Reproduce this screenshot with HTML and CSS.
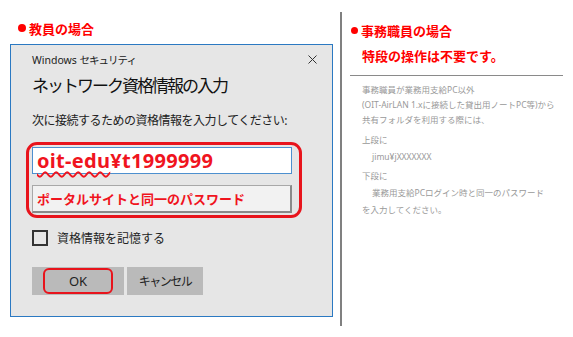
FILE: index.html
```html
<!DOCTYPE html>
<html lang="ja">
<head>
  <meta charset="UTF-8">
  <title>共有フォルダの資格情報</title>
  <link rel="stylesheet" href="styles.css">
</head>
<body>
  <div class="page">
    <div class="col-left">
      <h2 class="case"><span class="dot"></span>教員の場合</h2>
      <div class="dialog">
        <div class="titlebar">
          <span class="app">Windows <span class="kana">セキュリティ</span></span>
          <svg class="close" width="9" height="9" viewBox="0 0 9 9">
            <path d="M0.5 0.5 L8.5 8.5 M8.5 0.5 L0.5 8.5" stroke="#333" stroke-width="1" fill="none"/>
          </svg>
        </div>
        <div class="dlg-title">ネットワーク資格情報の入力</div>
        <div class="prompt">次に接続するための資格情報を入力してください:</div>
        <div class="mark">
          <div class="field user"><span class="typo">oit-edu</span>¥t1999999</div>
          <div class="field pass">ポータルサイトと同一のパスワード</div>
        </div>
        <div class="remember"><span class="box"></span>資格情報を記憶する</div>
        <div class="buttons">
          <div class="btn ok"><span class="ring">OK</span></div>
          <div class="btn cancel">キャンセル</div>
        </div>
      </div>
    </div>

    <div class="divider"></div>

    <div class="col-right">
      <h2 class="case small-dot"><span class="dot"></span>事務職員の場合</h2>
      <p class="notice">特段の操作は不要です。</p>
      <hr class="rule">
      <div class="note">
        <p class="intro">事務職員が業務用支給PC以外<br>(OIT-AirLAN 1.xに接続した貸出用ノートPC等)から<br>共有フォルダを利用する際には、</p>
        <p>上段に</p>
        <p class="indent">jimu¥jXXXXXXX</p>
        <p class="gap">下段に</p>
        <p class="indent">業務用支給PCログイン時と同一のパスワード</p>
        <p>を入力してください。</p>
      </div>
    </div>
  </div>
</body>
</html>
```

FILE: styles.css
```css
* {
  box-sizing: border-box;
}

body {
  margin: 0;
  background: #ffffff;
  font-family: "Noto Sans", "Noto Sans CJK JP", sans-serif;
  color: #000000;
}

.page {
  display: flex;
  width: 573px;
  height: 337px;
}

/* 見出し */
.case {
  display: flex;
  align-items: center;
  margin: 18px 0 6px 0;
  padding-left: 8px;
  height: 20px;
  font-size: 13px;
  font-weight: bold;
  color: #ff0000;
  font-family: "Noto Sans CJK JP", sans-serif;
}

.dot {
  width: 8px;
  height: 8px;
  border-radius: 50%;
  background: #ff0000;
  margin-right: 3px;
}

.small-dot {
  margin-top: 20px;
  padding-left: 9px;
}

.small-dot .dot {
  width: 7px;
  height: 7px;
  margin-right: 3px;
}

/* 左側 */
.col-left {
  width: 340px;
  padding-left: 10px;
}

.dialog {
  width: 323px;
  background: #e6e6e6;
  border: 1px solid #2b79c2;
  padding: 0 0 21px 21px;
}

.titlebar {
  height: 28px;
  display: flex;
  align-items: center;
  justify-content: space-between;
  padding-right: 15px;
  font-size: 10.5px;
  color: #222;
}

.kana {
  letter-spacing: -1px;
}

.dlg-title {
  height: 24px;
  line-height: 24px;
  font-size: 17px;
  letter-spacing: -2px;
  font-family: "Noto Sans CJK JP", sans-serif;
  color: #111;
}

.prompt {
  margin-top: 15px;
  height: 18px;
  line-height: 18px;
  font-size: 12px;
  letter-spacing: -0.5px;
  color: #222;
}

.mark {
  margin: 12px 0 0 -6px;
  width: 276px;
  border: 3px solid #e8141c;
  border-radius: 11px;
  padding: 2px 7px 2px 3px;
  display: flex;
  flex-direction: column;
  gap: 11px;
}

.field {
  display: flex;
  align-items: center;
  padding-left: 4px;
  color: #f0141e;
  font-weight: bold;
}

.user {
  height: 27px;
  background: #ffffff;
  border: 1px solid #4d90cf;
  font-size: 20px;
  letter-spacing: 0.3px;
}

.typo {
  text-decoration: underline wavy #f0141e;
  text-decoration-thickness: 1.5px;
  text-underline-offset: 3px;
}

.pass {
  height: 28px;
  background: #f2f2f2;
  border: 1px solid #a8a8a8;
  border-right: 2px solid #8a8a8a;
  border-bottom: 2px solid #8a8a8a;
  font-size: 13px;
  font-family: "Noto Sans CJK JP", sans-serif;
}

.remember {
  margin-top: 12px;
  height: 16px;
  display: flex;
  align-items: center;
  font-size: 12px;
  color: #222;
}

.box {
  width: 16px;
  height: 16px;
  border: 2px solid #333;
  margin-right: 9px;
}

.buttons {
  margin-top: 21px;
  display: flex;
  gap: 3px;
}

.btn {
  height: 28px;
  display: flex;
  align-items: center;
  justify-content: center;
  background: #bababa;
  font-size: 13px;
  color: #222;
}

.ok {
  width: 92px;
}

.ring {
  width: 70px;
  height: 26px;
  border: 2.5px solid #e8141c;
  border-radius: 6px;
  display: flex;
  align-items: center;
  justify-content: center;
}

.cancel {
  width: 76px;
  font-size: 12px;
  letter-spacing: -1.5px;
}

/* 区切り線 */
.divider {
  width: 2px;
  height: 314px;
  margin-top: 12px;
  background: #808080;
}

/* 右側 */
.col-right {
  flex: 1;
}

.notice {
  margin: 6px 0 0 20px;
  height: 20px;
  line-height: 20px;
  font-size: 13px;
  font-weight: bold;
  color: #ff0000;
  font-family: "Noto Sans CJK JP", sans-serif;
}

.rule {
  margin: 9px 0 0 8px;
  width: 213px;
  border: none;
  border-top: 1px solid #8a8a8a;
}

.note {
  margin-top: 6px;
  padding-left: 20px;
  font-size: 8.5px;
  color: #999999;
}

.note p {
  margin: 0;
  line-height: 17px;
}

.note .intro {
  line-height: 15px;
  margin-bottom: 4px;
}

.note .indent {
  padding-left: 10px;
}

.note .gap {
  margin-top: 2px;
}
```
